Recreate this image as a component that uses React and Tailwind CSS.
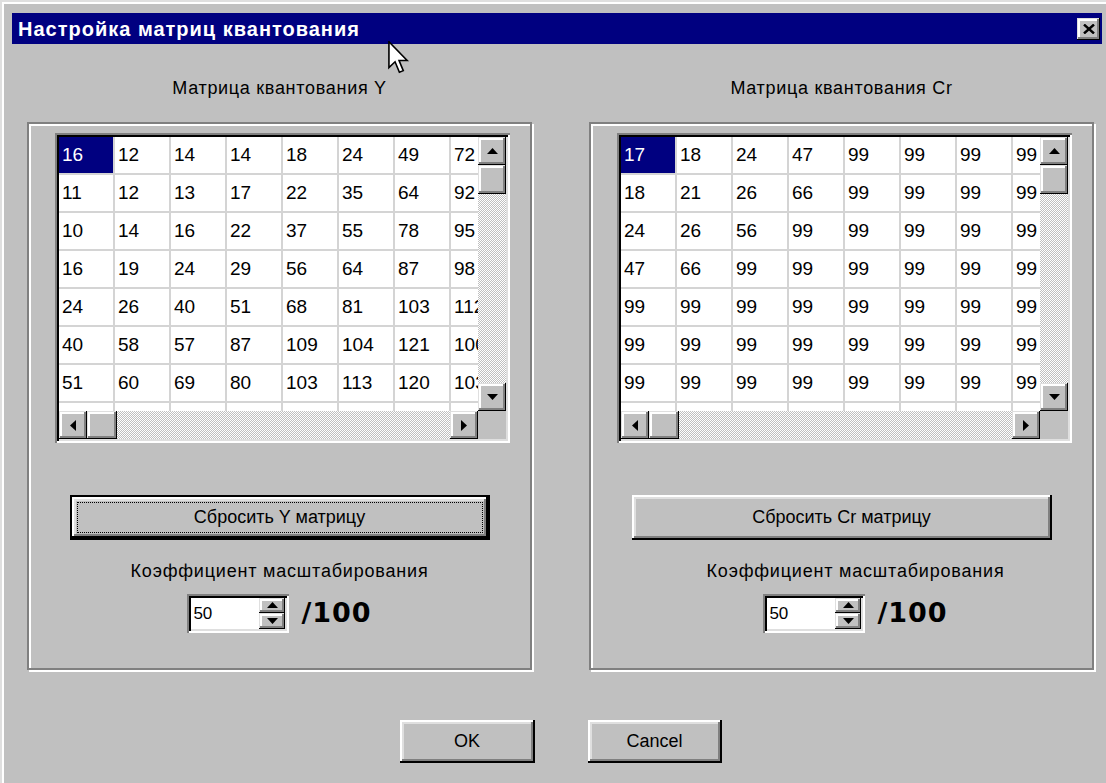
import React from 'react'

const Y_TABLE = [
  [16, 12, 14, 14, 18, 24, 49, 72],
  [11, 12, 13, 17, 22, 35, 64, 92],
  [10, 14, 16, 22, 37, 55, 78, 95],
  [16, 19, 24, 29, 56, 64, 87, 98],
  [24, 26, 40, 51, 68, 81, 103, 112],
  [40, 58, 57, 87, 109, 104, 121, 100],
  [51, 60, 69, 80, 103, 113, 120, 103],
  [61, 55, 56, 62, 77, 92, 101, 99],
]

const CR_TABLE = [
  [17, 18, 24, 47, 99, 99, 99, 99],
  [18, 21, 26, 66, 99, 99, 99, 99],
  [24, 26, 56, 99, 99, 99, 99, 99],
  [47, 66, 99, 99, 99, 99, 99, 99],
  [99, 99, 99, 99, 99, 99, 99, 99],
  [99, 99, 99, 99, 99, 99, 99, 99],
  [99, 99, 99, 99, 99, 99, 99, 99],
  [99, 99, 99, 99, 99, 99, 99, 99],
]

const raised =
  'shadow-[inset_-2px_-2px_0_#000,inset_2px_2px_0_#fff,inset_-4px_-4px_0_#808080,inset_4px_4px_0_#dfdfdf]'
const raisedSmall =
  'shadow-[inset_-1px_-1px_0_#000,inset_1px_1px_0_#dfdfdf,inset_-3px_-3px_0_#808080,inset_3px_3px_0_#fff]'
const sunken =
  'shadow-[inset_2px_2px_0_#808080,inset_-2px_-2px_0_#fff,inset_4px_4px_0_#000,inset_-4px_-4px_0_#dfdfdf]'
const dither = 'bg-[repeating-conic-gradient(#c0c0c0_0%_25%,#ffffff_0%_50%)] bg-[length:2px_2px]'

const Arrow = ({ dir, size = 11 }) => {
  const pts = {
    up: '0,6 5.5,0 11,6',
    down: '0,0 5.5,6 11,0',
    left: '6,0 0,5.5 6,11',
    right: '0,0 6,5.5 0,11',
  }[dir]
  const vertical = dir === 'up' || dir === 'down'
  return (
    <svg
      width={vertical ? size : size * 0.55}
      height={vertical ? size * 0.55 : size}
      viewBox={vertical ? '0 0 11 6' : '0 0 6 11'}
    >
      <polygon points={pts} fill="#000" />
    </svg>
  )
}

const ScrollBtn = ({ dir, className = '' }) => (
  <div className={`flex shrink-0 items-center justify-center bg-[#c0c0c0] ${raisedSmall} ${className}`}>
    <Arrow dir={dir} />
  </div>
)

const Matrix = ({ data }) => (
  <div className={`h-[310px] w-[455px] p-[4px] ${sunken}`}>
    <div className="flex h-full flex-col bg-white">
      <div className="flex h-[274px]">
        <div className="flex-1 overflow-hidden">
          <div className="grid w-max auto-rows-[36px] grid-cols-[repeat(8,54px)] gap-[2px] bg-[#d4d4d4]">
            {data.flat().map((v, i) => (
              <div
                key={i}
                className={`flex items-center pl-[3px] text-[19px] ${
                  i === 0 ? 'bg-[#000080] text-white' : 'bg-white'
                }`}
              >
                {v}
              </div>
            ))}
          </div>
        </div>
        {/* vertical scrollbar */}
        <div className="flex w-[28px] flex-col">
          <ScrollBtn dir="up" className="h-[28px]" />
          <div className={`h-[29px] bg-[#c0c0c0] ${raisedSmall}`} />
          <div className={`flex-1 ${dither}`} />
          <ScrollBtn dir="down" className="h-[28px]" />
        </div>
      </div>
      {/* horizontal scrollbar */}
      <div className="flex h-[28px]">
        <ScrollBtn dir="left" className="w-[28px]" />
        <div className={`w-[30px] bg-[#c0c0c0] ${raisedSmall}`} />
        <div className={`flex-1 ${dither}`} />
        <ScrollBtn dir="right" className="w-[28px]" />
        <div className="w-[28px] bg-[#c0c0c0]" />
      </div>
    </div>
  </div>
)

const SpinBox = ({ value }) => (
  <div className={`h-[39px] w-[102px] p-[4px] ${sunken}`}>
    <div className="flex h-full bg-white">
      <div className="flex flex-1 items-center pl-[2px] text-[17px]">{value}</div>
      <div className="flex w-[26px] flex-col">
        <ScrollBtn dir="up" className="flex-1" />
        <ScrollBtn dir="down" className="flex-1" />
      </div>
    </div>
  </div>
)

const ResetButton = ({ label, isDefault }) =>
  isDefault ? (
    <div className="h-[45px] w-[420px] border-2 border-black">
      <div className={`flex h-full bg-[#c0c0c0] p-[5px] ${raised}`}>
        <div className="flex flex-1 items-center justify-center border border-dotted border-black">
          {label}
        </div>
      </div>
    </div>
  ) : (
    <div className={`flex h-[45px] w-[420px] items-center justify-center bg-[#c0c0c0] ${raised}`}>
      {label}
    </div>
  )

const Panel = ({ title, data, resetLabel, isDefault, shift }) => (
  <div className="w-[505px]">
    <div className="mt-[34px] h-[21px] text-center leading-[21px] tracking-[0.7px]">{title}</div>
    <div className="mt-[23px] h-[548px] border-2 border-[#808080] shadow-[inset_2px_2px_0_#fff,2px_2px_0_#fff]">
      <div className="ml-[26px] mt-[9px]">
        <Matrix data={data} />
      </div>
      <div className="mt-[52px] flex justify-center">
        <ResetButton label={resetLabel} isDefault={isDefault} />
      </div>
      <div className={`flex flex-col items-center ${shift ? 'ml-[28px]' : ''}`}>
        <div className="mt-[21px] h-[21px] leading-[21px] tracking-[0.8px]">Коэффициент масштабирования</div>
        <div className="mt-[11px] flex items-center gap-[12px]">
          <SpinBox value="50" />
          <span className="font-['DejaVu_Sans',sans-serif] text-[27px] font-bold tracking-[1px]">/100</span>
        </div>
      </div>
    </div>
  </div>
)

const DialogButton = ({ label, width }) => (
  <div className={`flex h-[43px] items-center justify-center bg-[#c0c0c0] ${raised} ${width}`}>{label}</div>
)

export default function App() {
  return (
    <div className="relative h-[783px] w-[1106px] overflow-hidden bg-[#c0c0c0] pl-[12px] pt-[13px] font-['Liberation_Sans',Arial,sans-serif] text-[18px] text-black shadow-[inset_2px_2px_0_#dfdfdf,inset_4px_4px_0_#fff]">
      {/* caption */}
      <div className="flex h-[31px] w-[1090px] items-center justify-between bg-[#000080] pl-[6px] pr-[2px]">
        <span className="text-[20px] font-bold tracking-[1px] text-white">Настройка матриц квантования</span>
        <div className={`flex h-[22px] w-[23px] items-center justify-center bg-[#c0c0c0] ${raisedSmall}`}>
          <svg width="12" height="10" viewBox="0 0 12 10">
            <path d="M1 0.5L11 9.5M11 0.5L1 9.5" stroke="#000" strokeWidth="2.4" />
          </svg>
        </div>
      </div>

      <div className="ml-[15px] w-[1067px]">
        <div className="flex gap-[57px]">
          <Panel title="Матрица квантования Y" data={Y_TABLE} resetLabel="Сбросить Y матрицу" isDefault />
          <Panel title="Матрица квантования Cr" data={CR_TABLE} resetLabel="Сбросить Cr матрицу" shift />
        </div>
        <div className="mt-[50px] flex justify-center gap-[53px]">
          <DialogButton label="OK" width="w-[135px]" />
          <DialogButton label="Cancel" width="w-[134px]" />
        </div>
      </div>

      {/* mouse pointer */}
      <svg className="absolute left-[388px] top-[41px]" width="22" height="33" viewBox="0 0 13.5 20.5">
        <path
          d="M0.5 0.5V16.5L4.3 12.9L7 19.4L9.4 18.4L6.8 12.1H11.8Z"
          fill="#fff"
          stroke="#000"
          strokeWidth="1"
        />
      </svg>
    </div>
  )
}
